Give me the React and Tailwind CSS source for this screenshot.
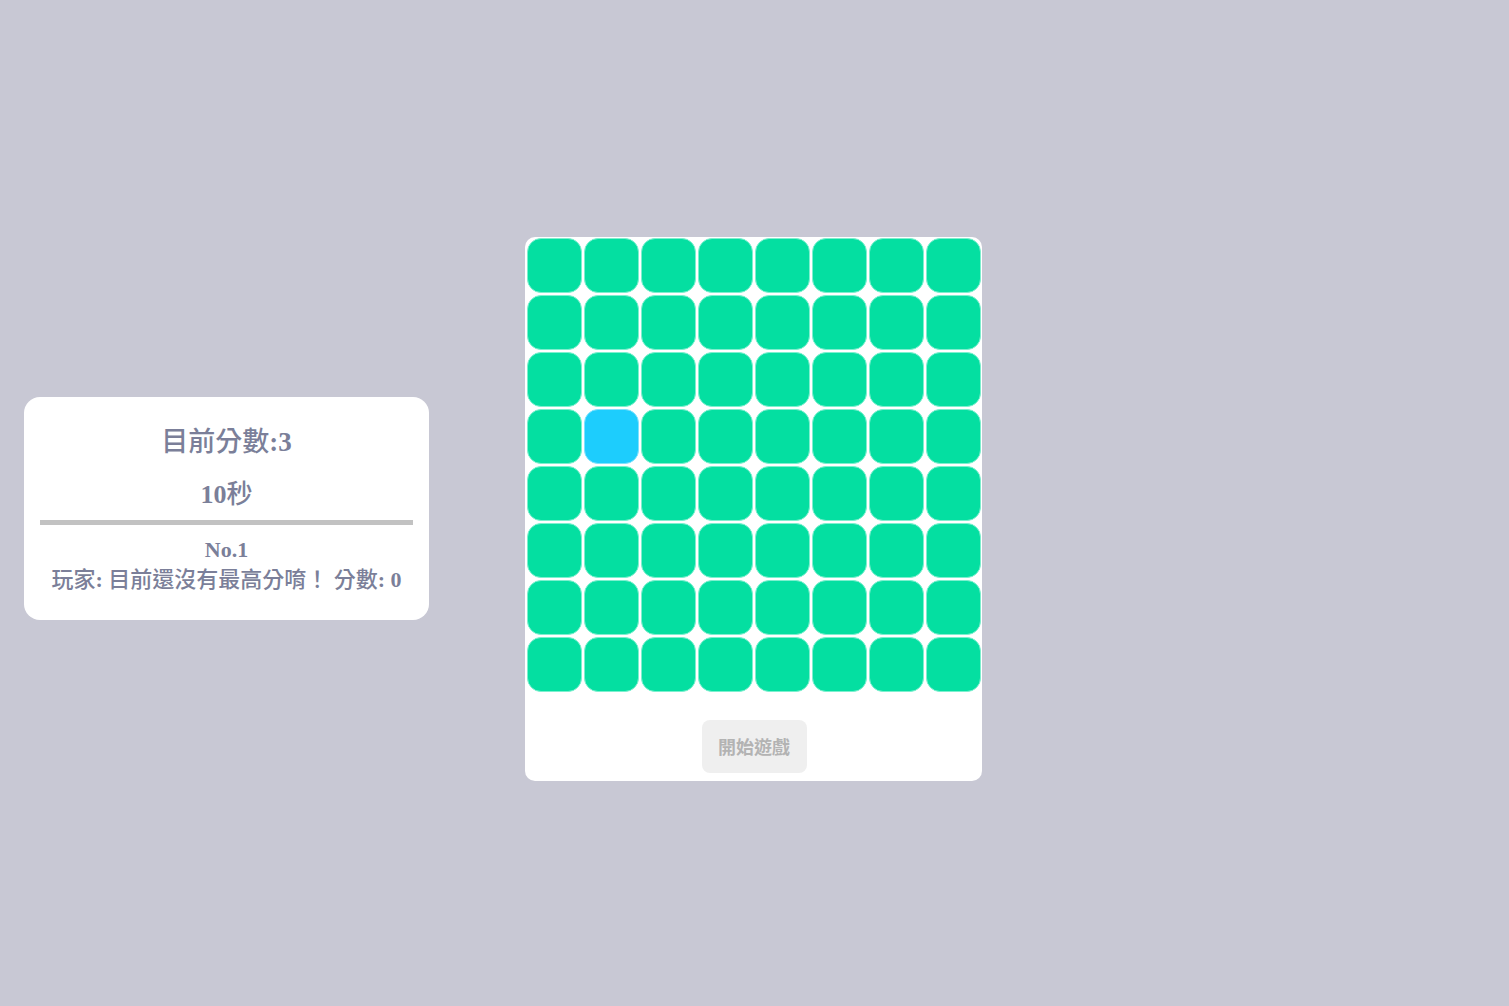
import React from "react";

const font = { fontFamily: '"Liberation Serif", "Noto Sans CJK TC", serif' };

const C = ({ children }) => <span className="font-medium">{children}</span>;

export default function App() {
  const cells = Array.from({ length: 64 }, (_, i) => i);
  return (
    <div className="w-full h-[1006px] bg-[#c8c8d4] flex items-center" style={font}>
      <div className="ml-[24px] mt-[11px] w-[405px] h-[223px] rounded-[16px] bg-white px-4 pt-[29px] text-[#7b7f99] font-bold text-center">
        <div className="text-[27px] leading-[32px]"><C>目前分數</C>:3</div>
        <div className="mt-[21px] text-[26px] leading-[32px]">10<C>秒</C></div>
        <div className="mt-[9px] h-[5px] bg-[#c2c2c2]" />
        <div className="mt-[10px] text-[22px] leading-[30px]">No.1</div>
        <div className="text-[22px] leading-[30px] whitespace-nowrap"><C>玩家</C>: <C>目前還沒有最高分唷！</C> <C>分數</C>: 0</div>
      </div>
      <div className="ml-[96px] mt-[12px] w-[457px] h-[544px] rounded-[10px] bg-white pl-[2px] pr-[1px] pt-[1px] flex flex-col items-center">
        <div className="grid grid-cols-8 gap-[2px]">
          {cells.map((i) => (
            <div
              key={i}
              className={
                "w-[55px] h-[55px] rounded-[14px] border " +
                (i === 25 ? "bg-[#1dcdfd] border-[#7fe2fd]" : "bg-[#04dfa1] border-[#7df0cf]")
              }
            />
          ))}
        </div>
        <button className="mt-[28px] w-[105px] h-[53px] pt-[4px] rounded-[8px] bg-[#efefef] text-[#b3b3b3] text-[18px] font-bold" style={font}>
          開始遊戲
        </button>
      </div>
    </div>
  );
}
